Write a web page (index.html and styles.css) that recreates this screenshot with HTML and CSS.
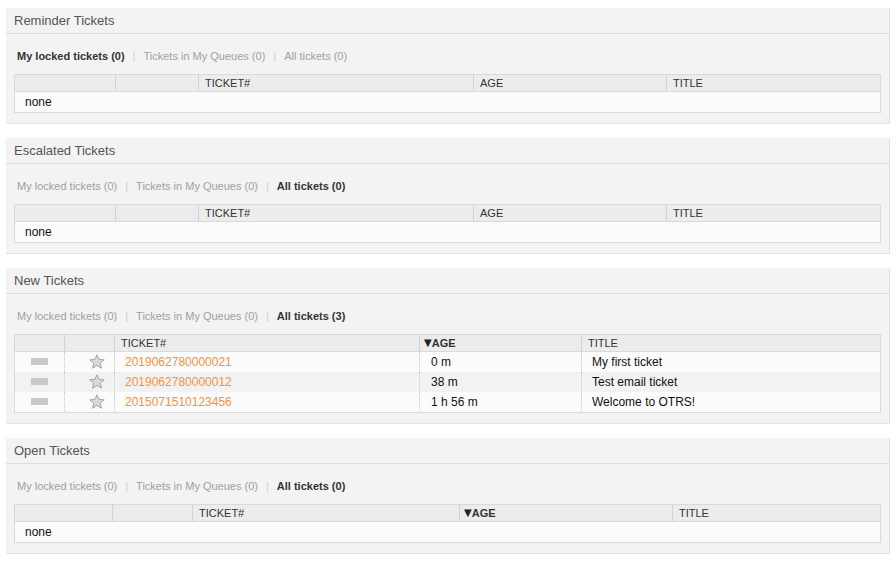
FILE: index.html
```html
<!DOCTYPE html>
<html>
<head>
<meta charset="utf-8">
<link rel="stylesheet" href="styles.css">
</head>
<body>
<div class="page">

  <section class="widget">
    <div class="widget-head">Reminder Tickets</div>
    <div class="widget-body">
      <div class="tabs">
        <span class="tab active">My locked tickets (0)</span><span class="sep">|</span><span class="tab">Tickets in My Queues (0)</span><span class="sep">|</span><span class="tab">All tickets (0)</span>
      </div>
      <table class="grid grid-a">
        <colgroup><col class="c1"><col class="c2"><col class="c3"><col class="c4"><col class="c5"></colgroup>
        <thead><tr><th></th><th></th><th>TICKET#</th><th>AGE</th><th>TITLE</th></tr></thead>
        <tbody><tr class="empty"><td colspan="5">none</td></tr></tbody>
      </table>
    </div>
  </section>

  <section class="widget">
    <div class="widget-head">Escalated Tickets</div>
    <div class="widget-body">
      <div class="tabs">
        <span class="tab">My locked tickets (0)</span><span class="sep">|</span><span class="tab">Tickets in My Queues (0)</span><span class="sep">|</span><span class="tab active">All tickets (0)</span>
      </div>
      <table class="grid grid-a">
        <colgroup><col class="c1"><col class="c2"><col class="c3"><col class="c4"><col class="c5"></colgroup>
        <thead><tr><th></th><th></th><th>TICKET#</th><th>AGE</th><th>TITLE</th></tr></thead>
        <tbody><tr class="empty"><td colspan="5">none</td></tr></tbody>
      </table>
    </div>
  </section>

  <section class="widget">
    <div class="widget-head">New Tickets</div>
    <div class="widget-body">
      <div class="tabs">
        <span class="tab">My locked tickets (0)</span><span class="sep">|</span><span class="tab">Tickets in My Queues (0)</span><span class="sep">|</span><span class="tab active">All tickets (3)</span>
      </div>
      <table class="grid grid-b">
        <colgroup><col class="c1"><col class="c2"><col class="c3"><col class="c4"><col class="c5"></colgroup>
        <thead><tr><th></th><th></th><th>TICKET#</th><th class="sorted"><span class="arrow">▼</span>AGE</th><th>TITLE</th></tr></thead>
        <tbody>
          <tr class="row">
            <td class="prio"><span class="prio-bar"></span></td>
            <td class="flag"><svg class="star" width="16" height="15" viewBox="0 0 16 15"><polygon points="8,0.8 10.1,5.4 15.2,5.8 11.3,9.1 12.5,14.2 8,11.5 3.5,14.2 4.7,9.1 0.8,5.8 5.9,5.4" /></svg></td>
            <td><a class="tn">2019062780000021</a></td>
            <td class="age">0 m</td>
            <td>My first ticket</td>
          </tr>
          <tr class="row">
            <td class="prio"><span class="prio-bar"></span></td>
            <td class="flag"><svg class="star" width="16" height="15" viewBox="0 0 16 15"><polygon points="8,0.8 10.1,5.4 15.2,5.8 11.3,9.1 12.5,14.2 8,11.5 3.5,14.2 4.7,9.1 0.8,5.8 5.9,5.4" /></svg></td>
            <td><a class="tn">2019062780000012</a></td>
            <td class="age">38 m</td>
            <td>Test email ticket</td>
          </tr>
          <tr class="row">
            <td class="prio"><span class="prio-bar"></span></td>
            <td class="flag"><svg class="star" width="16" height="15" viewBox="0 0 16 15"><polygon points="8,0.8 10.1,5.4 15.2,5.8 11.3,9.1 12.5,14.2 8,11.5 3.5,14.2 4.7,9.1 0.8,5.8 5.9,5.4" /></svg></td>
            <td><a class="tn">2015071510123456</a></td>
            <td class="age">1 h 56 m</td>
            <td>Welcome to OTRS!</td>
          </tr>
        </tbody>
      </table>
    </div>
  </section>

  <section class="widget">
    <div class="widget-head">Open Tickets</div>
    <div class="widget-body">
      <div class="tabs">
        <span class="tab">My locked tickets (0)</span><span class="sep">|</span><span class="tab">Tickets in My Queues (0)</span><span class="sep">|</span><span class="tab active">All tickets (0)</span>
      </div>
      <table class="grid grid-c">
        <colgroup><col class="c1"><col class="c2"><col class="c3"><col class="c4"><col class="c5"></colgroup>
        <thead><tr><th></th><th></th><th>TICKET#</th><th class="sorted"><span class="arrow">▼</span>AGE</th><th>TITLE</th></tr></thead>
        <tbody><tr class="empty"><td colspan="5">none</td></tr></tbody>
      </table>
    </div>
  </section>

</div>
</body>
</html>
```
FILE: styles.css
```css
html, body {
  margin: 0;
  padding: 0;
  background: #ffffff;
  font-family: "Liberation Sans", Arial, sans-serif;
  color: #000;
}

.page {
  padding: 8px 6px 0 6px;
}

.widget {
  background: #f3f3f3;
  border-right: 1px solid #e2e2e2;
  border-bottom: 1px solid #e2e2e2;
  margin-bottom: 14px;
}

.widget-head {
  height: 25px;
  line-height: 26px;
  padding-left: 8px;
  font-size: 13px;
  color: #555;
  border-bottom: 1px solid #dcdcdc;
}

.widget-body {
  padding: 15px 8px 10px 8px;
}

.tabs {
  font-size: 11px;
  line-height: 14px;
  height: 14px;
  margin-bottom: 11px;
  padding-left: 3px;
  color: #a0a0a0;
}

.tab.active {
  color: #333;
  font-weight: bold;
}

.sep {
  color: #cfcfcf;
  margin: 0 8px;
}

.grid {
  width: 100%;
  table-layout: fixed;
  border-collapse: collapse;
  border: 1px solid #dadada;
  font-size: 12px;
}

.grid th {
  background: #ececec;
  height: 16px;
  padding: 0 0 0 6px;
  font-size: 11px;
  font-weight: normal;
  color: #333;
  text-align: left;
  border-left: 1px solid #d3d3d3;
  border-bottom: 1px solid #dadada;
  line-height: 16px;
  overflow: hidden;
}

.grid th:first-child {
  border-left: none;
}

.grid th.sorted {
  font-weight: bold;
  padding-left: 4px;
}

.arrow {
  display: inline-block;
  height: 16px;
  line-height: 16px;
  vertical-align: top;
  font-family: "DejaVu Sans", sans-serif;
  font-size: 10px;
  font-weight: normal;
  color: #222;
}

.grid td {
  padding: 0 0 0 10px;
  height: 20px;
  line-height: 20px;
  color: #111;
  border-left: 1px dotted #c8c8c8;
  white-space: nowrap;
}

.grid td:first-child {
  border-left: none;
}

.grid tr.empty td {
  background: #fbfbfb;
  height: 20px;
  padding-left: 10px;
}

.grid tr.row:nth-child(odd) td {
  background: #fcfcfc;
}

.grid tr.row:nth-child(even) td {
  background: #f2f2f2;
}

.grid td.age {
  padding-left: 11px;
}

.grid td.prio {
  padding: 0;
  text-align: center;
}

.prio-bar {
  display: inline-block;
  width: 17px;
  height: 7px;
  background: #c9c9c9;
  vertical-align: middle;
  margin-top: -2px;
}

.grid td.flag {
  padding: 0 9px 0 0;
  text-align: right;
}

.star {
  display: inline-block;
  vertical-align: middle;
  margin-top: -3px;
}

.star polygon {
  fill: #d9d9d9;
  stroke: #a4a4ac;
  stroke-width: 1;
  stroke-linejoin: round;
}

.tn {
  color: #f5923e;
  text-decoration: none;
}

/* column widths: reminder / escalated */
.grid-a .c1 { width: 101px; }
.grid-a .c2 { width: 83px; }
.grid-a .c3 { width: 275px; }
.grid-a .c4 { width: 193px; }

/* new tickets */
.grid-b .c1 { width: 50px; }
.grid-b .c2 { width: 50px; }
.grid-b .c3 { width: 305px; }
.grid-b .c4 { width: 162px; }

/* open tickets */
.grid-c .c1 { width: 98px; }
.grid-c .c2 { width: 80px; }
.grid-c .c3 { width: 267px; }
.grid-c .c4 { width: 213px; }
```
